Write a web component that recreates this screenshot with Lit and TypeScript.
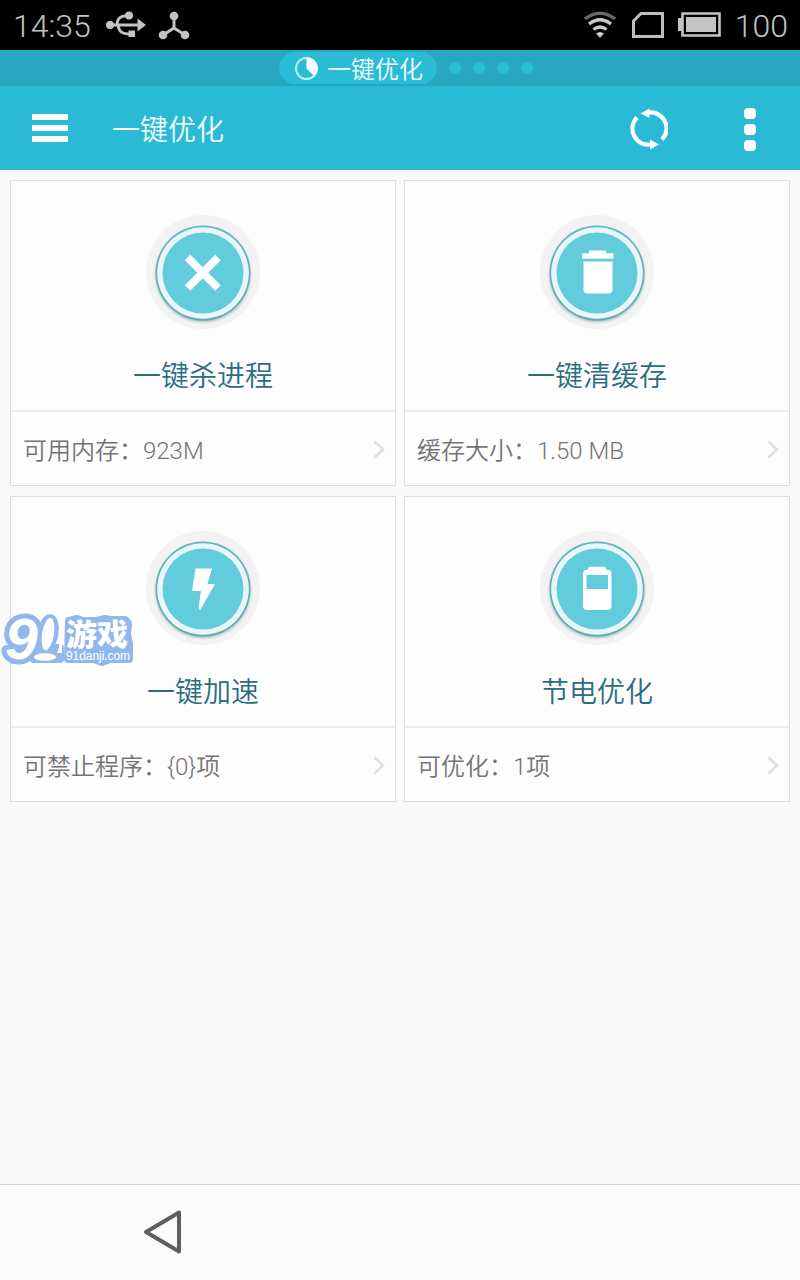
import { LitElement, html, svg, css, type TemplateResult } from "lit";
import { customElement, property } from "lit/decorators.js";

const glyphs: Record<string, TemplateResult> = {
  close: svg`<path d="M41.500 42.500L72 73M72 42.500L41.500 73" stroke="#fff" stroke-width="7.800" stroke-linecap="butt"/>`,
  trash: svg`<path d="M49 35.500h17v2.800h7.500v5.500H42v-5.500h7zM43.500 46.500h29v28a4 4 0 0 1-4 4H47.500a4 4 0 0 1-4-4z" fill="#fff"/>`,
  bolt: svg`<path d="M49.500 37.500H66l-4.500 15.500h7.500L54.500 78.500q-2 1-2-1.500L55 60h-9z" fill="#fff"/>`,
  battery: svg`<path fill-rule="evenodd" d="M50 35.800h14q2 0 2 3h1.500a4 4 0 0 1 4 4v32.200a4 4 0 0 1-4 4h-20.500a4 4 0 0 1-4-4V42.800a4 4 0 0 1 4-4H48q0-3 2-3zM46.500 44v14h21.500V44z" fill="#fff"/>`,
};

@customElement("action-card")
export class ActionCard extends LitElement {
  @property() icon = "close";
  @property() label = "";
  @property() detail = "";

  static styles = css`
    :host { display: flex; flex-direction: column; box-sizing: border-box; height: 306px; border: 1px solid #dedede; background: #fdfdfd; }
    .main { display: flex; flex-direction: column; align-items: center; box-sizing: border-box; height: 231px; padding-top: 34px; border-bottom: 2px solid #ececec; }
    .icon { display: block; width: 114px; height: 114px; }
    .label { margin-top: 28px; font-size: 28px; line-height: 40px; color: #2a6c82; white-space: nowrap; }
    .foot { flex: 1; display: flex; align-items: center; justify-content: space-between; padding: 2px 9px 0 12px; font-size: 24px; line-height: 34px; color: #747474; font-weight: 350; white-space: nowrap; }
    .detail { padding-top: 2px; }
    .chevron { display: block; width: 14px; height: 20px; }
  `;

  render() {
    return html`
      <div class="main">
        <svg class="icon" viewBox="0 0 114 114" fill="none">
          <defs>
            <linearGradient id="rim" x1="0" y1="0" x2="0" y2="1">
              <stop offset="0" stop-color="#62b6c2"/><stop offset="1" stop-color="#66a9ae"/>
            </linearGradient>
            <filter id="soft" x="-20%" y="-20%" width="140%" height="140%"><feGaussianBlur stdDeviation="1.4"/></filter>
          </defs>
          <circle cx="57" cy="57" r="57" fill="#f3f3f3"/>
          <circle cx="57" cy="59.500" r="47" fill="#8caeb0" filter="url(#soft)"/>
          <circle cx="57" cy="58" r="47.500" fill="url(#rim)"/>
          <circle cx="57" cy="58" r="45.800" fill="#e8f7fc"/>
          <circle cx="57" cy="58" r="40.500" fill="#62cbdc"/>
          ${glyphs[this.icon]}
        </svg>
        <div class="label">${this.label}</div>
      </div>
      <div class="foot">
        <span class="detail">${this.detail}</span>
        <svg class="chevron" viewBox="0 0 14 20" fill="none"><path d="M2.500 1.500l8.500 8-8.500 8" stroke="#e0e0e0" stroke-width="2.600"/></svg>
      </div>`;
  }
}

@customElement("app-root")
export class AppRoot extends LitElement {
  static styles = css`
    :host { display: block; position: relative; width: 800px; height: 1280px; overflow: hidden; font-family: Roboto, "Noto Sans CJK SC", sans-serif; font-weight: 350; background: #fafafa; }
    .screen { display: flex; flex-direction: column; height: 100%; }
    svg { display: block; flex: none; }
    .status { display: flex; align-items: center; height: 50px; box-sizing: border-box; padding: 2px 12px 0 13px; background: #000; color: #c3c3c3; font-size: 32px; font-weight: 300; line-height: 38px; }
    .usb { margin-left: 15px; margin-top: -2px; }
    .nodes { margin-left: 12px; margin-top: -1px; }
    .wifi { margin-left: auto; margin-top: -2px; }
    .sim { margin-left: 16px; margin-top: -2px; }
    .power { margin-left: 14px; margin-top: -2px; }
    .level { margin-left: 14px; }
    .tabs { display: flex; align-items: center; height: 36px; padding-left: 279px; background: #27a7c0; }
    .pill { display: flex; align-items: center; box-sizing: border-box; width: 158px; height: 32px; padding-left: 15px; gap: 8px; border-radius: 16px; background: #2abbd5; color: #f2feff; font-size: 24px; line-height: 32px; white-space: nowrap; }
    .name { padding-top: 3px; }
    .dots { display: flex; gap: 12px; margin-left: 12px; }
    .dot { width: 12px; height: 12px; border-radius: 50%; background: #2abbd5; }
    .bar { display: flex; align-items: center; height: 84px; box-sizing: border-box; padding: 0 44px 0 32px; background: #2abad6; color: #f4feff; }
    .menu { display: flex; flex-direction: column; gap: 5px; width: 36px; }
    .line { height: 6px; background: #fff; }
    .title { margin-left: 44px; padding-top: 5px; font-size: 28px; line-height: 40px; }
    .sync { margin-left: auto; margin-top: 2px; }
    .more { display: flex; flex-direction: column; gap: 5px; margin: 3px 0 0 76px; }
    .block { width: 12px; height: 11px; border-radius: 4px; background: #fff; }
    .grid { flex: 1; display: grid; grid-template-columns: 386px 386px; column-gap: 8px; row-gap: 10px; align-content: start; padding: 10px; }
    .nav { height: 96px; box-sizing: border-box; border-top: 1px solid #cfcfcf; padding: 24px 0 0 142px; background: #fbfbfb; }
    .mark { position: absolute; left: 0; top: 608px; overflow: visible; }
  `;

  render() {
    return html`
      <div class="screen">
        <div class="status">
          <span>14:35</span>
          <svg class="usb" width="40" height="28" viewBox="0 0 40 28" fill="none" stroke="#c3c3c3" stroke-width="2.900">
            <path d="M3 14h32M11 14c0-7 4-9.500 12-9.500M12 14c1 7 4 9 13 9"/>
            <circle cx="4" cy="14" r="4" fill="#c3c3c3" stroke="none"/><circle cx="23" cy="4.500" r="4" fill="#c3c3c3" stroke="none"/>
            <path d="M22.500 19.500h6.500v6.500h-6.500zM31.500 7.500l8.500 6.500-8.500 6.500z" fill="#c3c3c3" stroke="none"/>
          </svg>
          <svg class="nodes" width="32" height="30" viewBox="0 0 32 30" fill="#c3c3c3">
            <path d="M16 5v12M5 24l11-7 11 7" fill="none" stroke="#c3c3c3" stroke-width="3"/>
            <circle cx="16" cy="5" r="4.300"/><circle cx="5" cy="24" r="4.300"/><circle cx="27" cy="24" r="4.300"/>
          </svg>
          <svg class="wifi" width="32" height="28" viewBox="0 0 32 28" fill="none" stroke="#c8c8c8" stroke-width="3.200">
            <path d="M1 8q15-11.500 30 0" stroke="#686868"/><path d="M5 13q11-8.500 22 0M9.500 18.500q6.500-5 13 0"/>
            <path d="M12 22.500q4-3 8 0l-4 4.500z" fill="#c8c8c8" stroke="none"/>
          </svg>
          <svg class="sim" width="32" height="26" viewBox="0 0 32 26" fill="none"><path d="M1.500 9L9 1.500h21.500v23h-29z" stroke="#bdbdbd" stroke-width="3"/></svg>
          <svg class="power" width="43" height="26" viewBox="0 0 43 26" fill="#c3c3c3">
            <path d="M0 6h4v13H0z"/><path d="M4.500 1.500h37v22h-37z" fill="none" stroke="#c3c3c3" stroke-width="2.600"/><path d="M8 5h30v15H8z"/>
          </svg>
          <span class="level">100</span>
        </div>
        <div class="tabs">
          <div class="pill">
            <svg width="25" height="25" viewBox="0 0 25 25" fill="none"><circle cx="12.500" cy="12.500" r="10.500" stroke="#b9eef5" stroke-width="2"/><path d="M12.500 12.500V1.500a11 11 0 0 1 7.800 18.800z" fill="#fff"/></svg>
            <span class="name">一键优化</span>
          </div>
          <div class="dots">${[0, 1, 2, 3].map(() => html`<div class="dot"></div>`)}</div>
        </div>
        <div class="bar">
          <div class="menu"><div class="line"></div><div class="line"></div><div class="line"></div></div>
          <div class="title">一键优化</div>
          <svg class="sync" width="38" height="42" viewBox="0 0 38 42" fill="none" stroke="#fff" stroke-width="4.200">
            <path d="M16 5A16 16 0 0 1 32 31.500M21 36.500A16 16 0 0 1 7 9.500"/>
            <path d="M10.500 5.500L19.500 0.500v9.500zM29 36.500l-9 5v-10z" fill="#fff" stroke="none"/>
          </svg>
          <div class="more"><div class="block"></div><div class="block"></div><div class="block"></div></div>
        </div>
        <div class="grid">
          <action-card icon="close" label="一键杀进程" detail="可用内存：923M"></action-card>
          <action-card icon="trash" label="一键清缓存" detail="缓存大小：1.50 MB"></action-card>
          <action-card icon="bolt" label="一键加速" detail="可禁止程序：{0}项"></action-card>
          <action-card icon="battery" label="节电优化" detail="可优化：1项"></action-card>
        </div>
        <div class="nav">
          <svg width="42" height="46" viewBox="0 0 42 46" fill="none"><path d="M4 23L37 3.500v39z" stroke="#5e5e5e" stroke-width="4" stroke-linejoin="round"/></svg>
        </div>
      </div>
      <svg class="mark" width="140" height="64" viewBox="0 0 140 64" fill="#fff">
        <g fill="#91b8ec" stroke="#91b8ec" stroke-width="8" stroke-linejoin="round">
          <path d="M69 13l8-2 6 2h14l8-2 6 1h14l3 3-1 11 2 10v15h-19l-8 3-8-3H68z"/>
          <path d="M18 26q12-4 20-2L22 52h-8zM38 40h22v11H34z"/>
          <ellipse cx="48" cy="25" rx="6.500" ry="15" transform="rotate(9 48 25)"/>
        </g>
        <text x="5" y="51" font-family="'Liberation Sans', sans-serif" font-size="58" font-weight="700" font-style="italic" stroke="#91b8ec" stroke-width="10" stroke-linejoin="round" paint-order="stroke" textLength="33" lengthAdjust="spacingAndGlyphs">9</text>
        <ellipse cx="48" cy="26" rx="7.500" ry="18" transform="rotate(9 48 26)" stroke="#91b8ec" stroke-width="3"/>
        <path d="M58 26q4 9-1 19h5V31z"/>
        <ellipse cx="45" cy="49" rx="11" ry="3.800"/>
        <text x="66" y="37" font-family="'Noto Sans CJK SC', sans-serif" font-size="30" font-weight="900" textLength="62" lengthAdjust="spacingAndGlyphs">游戏</text>
        <text x="66" y="52" font-family="'Liberation Sans', sans-serif" font-size="12" textLength="64" lengthAdjust="spacingAndGlyphs">91danji.com</text>
      </svg>`;
  }
}
